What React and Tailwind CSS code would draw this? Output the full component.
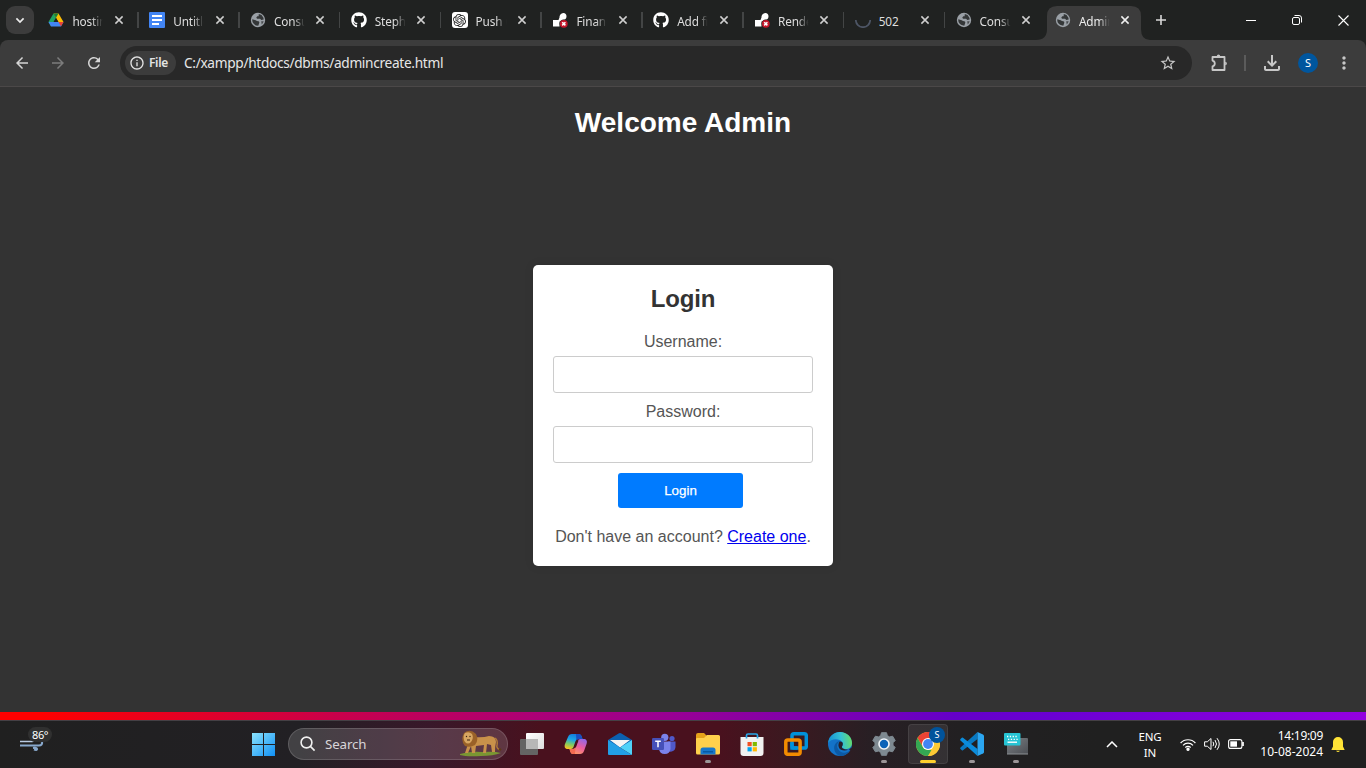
import React from "react";
import { FaGithub } from "react-icons/fa";
import { SiOpenai } from "react-icons/si";
import {
  MdStarBorder, MdRefresh, MdArrowBack,
  MdArrowForward, MdOutlineFileDownload, MdMoreVert, MdOutlineInfo,
} from "react-icons/md";

const DriveIcon = () => (
  <svg width="16" height="16" viewBox="0 0 16 16">
    <path d="M5.500 1.500 8 5.800 3 14.400.5 10z" fill="#1fa463" />
    <path d="M10.500 1.500 15.500 10H10.500L5.600 1.500z" fill="#fbbc04" />
    <path d="M5.500 1.500h5L8 5.800z" fill="#188038" />
    <path d="M.5 10H15.500L13 14.400H3z" fill="#4285f4" />
    <path d="M10.500 10h5L13 14.400z" fill="#ea4335" />
    <path d="M8 6.200 10.200 10H5.800z" fill="#202221" />
  </svg>
);
const DocsIcon = () => (
  <svg width="16" height="16" viewBox="0 0 16 16">
    <rect width="16" height="16" rx="1" fill="#4285f4" />
    <path d="M3 4h10M3 8h10M3 12h7" stroke="#fff" strokeWidth="1.900" />
  </svg>
);
const Globe = () => (
  <svg width="16" height="16" viewBox="0 0 16 16">
    <circle cx="8" cy="8" r="7.200" fill="#9aa0a6" />
    <path d="M2.300 7.200 5.700 8.300q1.200 1 2.600 1 1.200.2 1 1.500L8.300 13.700Q4.500 13.600 2.800 10.600 2.100 9 2.300 7.200z" fill="#343738" />
    <path d="M8.800 2.100q3.200.4 4.600 3.600l.3 1.900-2.400.3L10.100 6.700H7l-.7-1.200 1-1.300h1.300z" fill="#343738" />
    <path d="M11.200 9.200h2.500q-.5 2-2 3.200z" fill="#4a4d50" />
  </svg>
);
const Github = () => <FaGithub size={16} color="#fff" />;
const Gpt = () => (
  <span className="flex h-4 w-4 items-center justify-center rounded-[3px] bg-white">
    <SiOpenai size={13} color="#222" />
  </span>
);
const RenderIcon = () => (
  <svg width="16" height="16" viewBox="0 0 16 16">
    <path d="M1 8h5.500l1-2.500A4 4 0 0 1 11.300 1a3.400 3.400 0 0 1 3.200 3.400A3.800 3.800 0 0 1 11 8L7.500 9.500v5H1z" fill="#fff" />
    <circle cx="11.800" cy="11.800" r="4.300" fill="#202221" />
    <circle cx="11.800" cy="11.800" r="3.900" fill="#c5162a" />
    <path d="m10.200 10.200 3.200 3.200m0-3.200-3.200 3.200" stroke="#fff" strokeWidth="1.500" />
  </svg>
);
const Spinner = () => (
  <svg width="16" height="16" viewBox="0 0 16 16">
    <path d="M.800 8a7.200 7.200 0 0 0 14.400 0" fill="none" stroke="#4d5565" strokeWidth="1.700" />
  </svg>
);
const Extension = () => (
  <svg width="18" height="18" viewBox="0 0 18 18" fill="none" stroke="#c7c7c7" strokeWidth="1.800" strokeLinejoin="round">
    <path d="M2.500 3h12v13h-12v-3.600q2.300-.6 2.300-2.900T2.500 6.600z" />
    <path d="M6.800 2.200a1.700 1.700 0 0 1 3.400 0zM15.200 7.800a1.700 1.700 0 0 1 0 3.400z" fill="#c7c7c7" stroke="none" />
  </svg>
);
const Cross = ({ color = "#d4d4d4" }) => (
  <svg width="10" height="10" viewBox="0 0 10 10">
    <path d="m1.400 1.400 7.200 7.200m0-7.200L1.400 8.600" stroke={color} strokeWidth="1.500" />
  </svg>
);

const tabs = [
  ["hostin", DriveIcon], ["Untitle", DocsIcon], ["Consu", Globe], ["Stephe", Github],
  ["Push C", Gpt], ["Financ", RenderIcon], ["Add fi", Github], ["Rende", RenderIcon],
  ["502", Spinner], ["Consu", Globe],
];

function Tab({ title, Icon, active, last }) {
  return (
    <div
      className={
        "relative flex h-10 shrink-0 items-center " +
        (active ? "w-[100px] pl-[9px]" : "w-[100.8px] pl-[10.400px]")
      }
    >
      {active && (
        <svg className="absolute top-[6px] left-[-10px]" width="114" height="34" viewBox="0 0 114 34">
          <path d="M0 34q11 0 11-11V10Q11 0 21 0H95q10 0 10 10V23q0 11 9 11z" fill="#3c3c3c" />
        </svg>
      )}
      <span className="relative flex w-4 shrink-0 justify-center"><Icon /></span>
      <span
        className={
          "relative top-px ml-2 w-[32px] overflow-hidden text-[11.800px] leading-4 tracking-[-0.150px] whitespace-nowrap " +
          (title === "502" ? "" : "[mask-image:linear-gradient(to_right,black_62%,transparent_96%)] ") +
          (active ? "text-[#ececec]" : "text-[#dedede]")
        }
      >
        {title}
      </span>
      <span className="relative ml-[9.500px] flex"><Cross color={active ? "#f0f0f0" : "#cfcfcf"} /></span>
      {!active && !last && <span className="ml-auto h-4 w-[1.5px] bg-[#434545]" />}
    </div>
  );
}

function Browser() {
  return (
    <header>
      <div className="flex h-10 items-center bg-[#202221]">
        <button className="mr-[4px] ml-[6px] flex h-7 w-7 shrink-0 items-center justify-center rounded-[9px] bg-[#3c3c3c]">
          <svg width="10" height="7" viewBox="0 0 10 7"><path d="m1.400 1.400 3.600 3.600 3.600-3.600" fill="none" stroke="#ececec" strokeWidth="1.700" /></svg>
        </button>
        {tabs.map(([t, I], i) => <Tab key={i} title={t} Icon={I} last={i === 9} />)}
        <Tab title="Admin" Icon={Globe} active />
        <svg className="ml-[9px] shrink-0" width="12" height="12" viewBox="0 0 12 12"><path d="M6 1v10M1 6h10" stroke="#d8d8d8" strokeWidth="1.600" /></svg>
        <div className="ml-auto flex shrink-0 items-center pr-[17px]">
          <svg width="10" height="10"><path d="M0 5.500h10" stroke="#fff" /></svg>
          <svg className="ml-[36px]" width="10" height="10" viewBox="0 0 10 10" fill="none" stroke="#fff"><rect x=".5" y="2.500" width="7" height="7" rx="1.500" /><path d="M2.500.5H7A2.500 2.500 0 0 1 9.500 3V7.500" /></svg>
          <svg className="ml-[36px]" width="11" height="11" viewBox="0 0 11 11"><path d="m.5.5 10 10m0-10-10 10" stroke="#fff" strokeWidth="1.100" /></svg>
        </div>
      </div>
      <div className="bg-[#202221]">
        <div className="flex h-[47px] items-center rounded-t-lg border-b border-[#4b4848] bg-[#3c3c3c] text-[#c7c7c7]">
          <MdArrowBack className="ml-[13px]" size={18} color="#d5d5d5" />
          <MdArrowForward className="ml-[18px]" size={18} color="#7c7c7c" />
          <MdRefresh className="ml-[18px]" size={18} color="#d5d5d5" />
          <div className="ml-[17px] flex h-[34px] w-[1072px] items-center rounded-full bg-[#282828] pl-[5px]">
            <div className="flex h-6 w-[51px] items-center rounded-full bg-[#3c3c3c] pl-1">
              <MdOutlineInfo size={16} color="#e3e3e3" />
              <span className="ml-1 text-[12px] font-semibold tracking-[-0.350px] text-[#e3e3e3]">File</span>
            </div>
            <span className="ml-2 text-[13.700px] leading-5 tracking-[-0.320px] text-[#e6e6e6]">C:/xampp/htdocs/dbms/admincreate.html</span>
            <MdStarBorder className="mr-[15px] ml-auto" size={18} color="#c7c7c7" />
          </div>
          <span className="ml-[18px] flex"><Extension /></span>
          <span className="ml-[16px] h-4 w-[2px] bg-[#5b5b5b]" />
          <MdOutlineFileDownload className="ml-[14px]" size={24} />
          <span className="ml-[14px] flex h-5 w-5 items-center justify-center rounded-full bg-[#00569e] text-[11px] text-white">S</span>
          <MdMoreVert className="ml-[16px]" size={20} />
        </div>
      </div>
    </header>
  );
}

function Page() {
  return (
    <main className="flex h-[625px] flex-col items-center bg-[#333] font-['Liberation_Sans',sans-serif] text-[#555]">
      <h1 className="mt-[15px] text-[28px] leading-[42px] font-bold text-white">Welcome Admin</h1>
      <section className="mt-[121px] flex h-[301px] w-[300px] flex-col items-center rounded-[5px] bg-white px-5 shadow-[0_0_10px_rgba(0,0,0,0.1)]">
        <h2 className="mt-5 text-[24px] leading-7 font-bold tracking-[-0.200px] text-[#333]">Login</h2>
        <label className="mt-[20px] text-[16px] leading-[18px]">Username:</label>
        <input className="mt-[5px] h-[37px] w-[260px] rounded-[3px] border border-[#ccc] bg-white" />
        <label className="mt-[10px] text-[16px] leading-[18px]">Password:</label>
        <input className="mt-[5px] h-[37px] w-[260px] rounded-[3px] border border-[#ccc] bg-white" />
        <button className="mt-[10px] mr-[5px] h-[35px] w-[125px] rounded-[3px] bg-[#007bff] text-[13.333px] text-white [-webkit-text-stroke:0.250px_white]">Login</button>
        <p className="mt-[20px] text-[16px] leading-[18px] whitespace-nowrap">
          Don't have an account? <a className="text-[#0000ee] underline">Create one</a>.
        </p>
      </section>
    </main>
  );
}

const TaskView = () => (
  <svg width="24" height="24" viewBox="0 0 24 24">
    <defs><linearGradient id="tv" x2="1" y2="1"><stop stopColor="#fff" /><stop offset="1" stopColor="#ddd" /></linearGradient></defs>
    <rect y="7" width="18" height="16" rx="1" fill="#646464" />
    <rect x="6" y="1" width="18" height="16" rx="1" fill="url(#tv)" />
    <path d="M6 7h12v10H6z" fill="#b7b7b7" />
  </svg>
);
const Copilot = () => (
  <svg width="24" height="24" viewBox="0 0 24 24">
    <defs>
      <linearGradient id="ca" x1=".6" x2=".3" y2="1"><stop stopColor="#1479dc" /><stop offset=".4" stopColor="#1ba7e8" /><stop offset=".7" stopColor="#7bca65" /><stop offset="1" stopColor="#f5c324" /></linearGradient>
      <linearGradient id="cb" x1=".8" x2=".3" y2="1"><stop stopColor="#9267e8" /><stop offset=".5" stopColor="#eb5da0" /><stop offset="1" stopColor="#ff9a62" /></linearGradient>
    </defs>
    <path d="M8 2h7q2 0 2.800 2.500l.7 2.500H14q-1.800 0-2.500 2.200L9.500 15q-.6 2-2.500 2H4c-3 0-4-2-3-5L4 5q1-3 4-3z" fill="url(#ca)" />
    <path d="M12 2h3q2 0 2.800 2.500l.7 2.500H15q-1.600 0-2.600 1.600z" fill="#194fc2" />
    <path d="M16 22H9q-2 0-2.700-2.300L5.500 17h3.500q1.800 0 2.500-2.200L13.800 9q.6-2 2.500-2h3.200c3 0 4 2 3 5L20 19q-1 3-4 3z" fill="url(#cb)" />
    <path d="M11 22H9q-2 0-2.700-2.300L5.500 17H9q1.800 0 2.500-1.700z" fill="#f46b52" />
    <path d="M12.500 8.500h2l-2.600 7h-2z" fill="#49111e" />
  </svg>
);
const Mail = () => (
  <svg width="24" height="24" viewBox="0 0 24 24">
    <path d="M0 8 11 1.300q1-.6 2 0L24 8v7H0z" fill="#0c60b0" />
    <path d="M2 8h20l-10 7.500z" fill="#f4f4f4" />
    <path d="M24 8 12 15.500 24 23z" fill="#50d2f8" />
    <path d="M0 8v14q0 1 1 1h23L12 15.500z" fill="#229fe6" />
  </svg>
);
const Teams = () => (
  <svg width="24" height="24" viewBox="0 0 24 24">
    <circle cx="20" cy="6.500" r="2.600" fill="#5059c9" /><circle cx="12.800" cy="5.300" r="3.600" fill="#7b83eb" />
    <path d="M16 9.500h7.500V15a5 5 0 0 1-7.500 4z" fill="#5059c9" />
    <path d="M7 9.500h11.500V17a5.800 5.800 0 0 1-11.500 0z" fill="#7b83eb" />
    <rect y="6" width="12" height="12" rx="1.200" fill="#4650b8" />
    <path d="M3.200 9.300h5.600M6 9.300v6" stroke="#fff" strokeWidth="1.500" />
  </svg>
);
const Folder = () => (
  <svg width="24" height="24" viewBox="0 0 24 24">
    <path d="M0 3q0-2 2-2h6l3 3h11q2 0 2 2v5H0z" fill="#e6a21a" />
    <path d="M1.500 6H8l3-3h11.500Q24 3 24 4.500V21q0 1.500-1.500 1.500h-21Q0 22.500 0 21V6.500z" fill="#ffd04c" />
    <path d="M4.500 22.500V18q0-2.500 2.500-2.500h10q2.500 0 2.500 2.500v4.500z" fill="#1877c9" /><path d="M7 19h10v1.500H7z" fill="#0759a1" />
  </svg>
);
const Store = () => (
  <svg width="24" height="24" viewBox="0 0 24 24">
    <path d="M.5 5h23v16q0 3-3 3h-17q-3 0-3-3z" fill="#f1f1f1" />
    <path d="M6.500 6.500V3.500Q6.500 2 8 2h8q1.500 0 1.500 1.500v3" fill="none" stroke="#28a8ea" strokeWidth="1.700" />
    <path d="M7.500 10h4.200v4.200H7.500z" fill="#f25022" /><path d="M12.700 10h4.200v4.200h-4.200z" fill="#7fba00" />
    <path d="M7.500 15.200h4.200v4.200H7.500z" fill="#00a4ef" /><path d="M12.700 15.200h4.200v4.200h-4.200z" fill="#ffb900" />
  </svg>
);
const VmIcon = () => (
  <svg width="24" height="24" viewBox="0 0 24 24" fill="none" strokeWidth="3.500">
    <rect x="8" y="1.800" width="14.300" height="14.300" rx="2" stroke="#0091da" />
    <rect x="1.800" y="8" width="14.300" height="14.300" rx="2" stroke="#f38b00" />
    <path d="M8 10.500V16h5.500" stroke="#0091da" />
  </svg>
);
const Edge = () => (
  <svg width="24" height="24" viewBox="0 0 24 24">
    <defs><linearGradient id="eg" x1="0" y1=".5" x2="1" y2=".4"><stop stopColor="#1590d2" /><stop offset=".55" stopColor="#35c1d4" /><stop offset="1" stopColor="#66dc66" /></linearGradient></defs>
    <circle cx="12" cy="12" r="12" fill="#1373c9" />
    <path d="M0 11C1 4 6 0 12 0c7 0 12 5 12 11 0 4-3 6-6.500 6-2.500 0-4-1.500-3.500-2.500 1-1.500 1-3 .5-4C12 6 3 6 0 11z" fill="url(#eg)" />
    <path d="M12 9c-4 2-4 8 1 11 3 1.600 7 .5 9-2-2 4-6 6-10 6-5-1-8-9-4-13 1-1.200 3-2 4-2z" fill="#0c59a4" />
    <path d="M14 14.500c1-1.500 1-3 .5-4-1-1-2.500-1-3-.8-1.500 2-1.700 6 1.500 8 3.500 1.500 8 .5 10-2l1 .5c-1 2-2 3-2.700 1.300C19 18 13 17 14 14.500z" fill="#28202a" />
  </svg>
);
const Gear = () => (
  <svg width="24" height="24" viewBox="0 0 24 24">
    <path d="M9.500.7h5l.9 3 2.200 1.200 3-.7 2.600 4.300L21 10.800v2.400l2.200 2.300-2.600 4.300-3-.7-2.200 1.200-.9 3h-5l-.9-3-2.200-1.200-3 .7-2.600-4.300L3 13.200v-2.400L.8 8.500l2.600-4.300 3 .7 2.200-1.200z" fill="#7e8991" stroke="#7e8991" strokeLinejoin="round" />
    <circle cx="12" cy="12" r="5.800" fill="#f1f4f7" /><circle cx="12" cy="12" r="4.200" fill="#0b62b8" />
  </svg>
);
const Chrome = () => (
  <svg width="24" height="24" viewBox="0 0 24 24">
    <circle cx="12" cy="12" r="12" fill="#fcc934" />
    <path d="M1.600 6A12 12 0 0 1 22.400 6H12L7 15z" fill="#ea4335" />
    <path d="M1.600 6 6.800 15Q9 18 12 18h5.200L12 24A12 12 0 0 1 1.600 6z" fill="#34a853" />
    <path d="M17.200 15 12 24A12 12 0 0 0 22.400 6H12z" fill="#fcc934" />
    <circle cx="12" cy="12" r="6" fill="#fff" /><circle cx="12" cy="12" r="4.900" fill="#4285f4" />
  </svg>
);
const Code = () => (
  <svg width="24" height="24" viewBox="0 0 24 24">
    <path d="M.5 15.500 17.500 0v7L3 18.200q-.6.500-1.200 0l-1.300-1.100q-.7-.8 0-1.600z" fill="#0879c2" />
    <path d="M.5 8.500 17.500 24v-7L3 5.800q-.6-.5-1.200 0L.5 6.900q-.7.800 0 1.600z" fill="#0b8cdc" />
    <path d="M17.500 0 23 2.500q1 .5 1 1.500v16q0 1-1 1.500L17.500 24z" fill="#2ba6f1" />
  </svg>
);
const TouchKeyboard = () => (
  <svg width="24" height="24" viewBox="0 0 24 24">
    <defs><linearGradient id="tk" x2="1" y2="1"><stop stopColor="#7c8085" /><stop offset="1" stopColor="#4b4e53" /></linearGradient></defs>
    <path d="M3 6h20q1 0 1 1v15H3z" fill="url(#tk)" /><path d="M3 21.500h21v1H3z" fill="#8d9094" />
    <rect y="1" width="16.500" height="12.500" rx="1" fill="#27c4d4" />
    <path d="M3 4.500h11M4 7.300h10" stroke="#fff" strokeWidth="1.300" strokeDasharray="1.300 1.500" /><path d="M3.500 10.200h9.500" stroke="#fff" strokeWidth="1.400" />
  </svg>
);
const Lion = () => (
  <svg width="43" height="28" viewBox="0 0 43 28">
    <path d="M1 24q10-3 22-2 12-1 19 1-8 3-20 3Q8 27 1 25z" fill="#7a9632" />
    <path d="M14 7q10 1 16-1 7 0 7 6-1 4-1 10h-3l-1-7-4-1-1 9h-3l1-8-8 1-1 7h-3l-1-7-3 7H6l3-9z" fill="#c8914a" />
    <path d="M36 8q3 2 2 7-1 3 3 5" stroke="#b27a38" strokeWidth="1.400" fill="none" /><circle cx="41" cy="19.500" r="1.300" fill="#5d3a18" />
    <path d="M5 3q6-5 12 1 3 6-1 11-5 3-10 1-5-6-1-13z" fill="#9a6128" />
    <path d="M6 3q4-2 7 1 2 4-1 8-3 3-6 0-3-5 0-9z" fill="#d8a662" />
    <circle cx="7.500" cy="6.500" r=".7" fill="#3c2410" /><circle cx="11" cy="6.500" r=".7" fill="#3c2410" /><path d="M8 10h3" stroke="#3c2410" />
  </svg>
);

const apps = [
  [TaskView], [Copilot], [Mail], [Teams], [Folder, "dot"], [Store], [VmIcon], [Edge],
  [Gear, "dot"], [Chrome, "active"], [Code, "dot"], [TouchKeyboard, "dot"],
];

function Taskbar() {
  return (
    <footer className="flex h-12 items-center bg-[linear-gradient(to_right,#202020_0,#222024_300px,#39182a_430px,#49111e_540px,#49111e_720px,#3b1920_790px,#281f24_870px,#222022_960px,#202020_1100px)] shadow-[inset_0_1px_0_#454045]">
      <div className="relative ml-5 flex h-[46px] w-8 shrink-0 items-center">
        <svg width="24" height="15" viewBox="0 0 24 15" fill="none">
          <path d="M0 4.500h12q2 0 1-3" stroke="#b9cbe3" strokeWidth="1.700" />
          <path d="M0 8.500h19q3.500 0 3-3.500M13 11q4-.5 4 1t-3 .5" stroke="#88a8cc" strokeWidth="2.200" />
        </svg>
        <span className="absolute top-[6px] left-[8px] rounded-full bg-[#303030] px-[4px] text-[11px] leading-[15px] tracking-[-0.400px] text-white">86°</span>
      </div>
      <svg className="ml-[200px] shrink-0" width="23" height="23" viewBox="0 0 23 23">
        <defs><linearGradient id="wn" x2="1" y2="1"><stop stopColor="#8be3fd" /><stop offset="1" stopColor="#1090f5" /></linearGradient></defs>
        <path d="M0 0h11v11H0zM12 0h11v11H12zM0 12h11v11H0zM12 12h11v11H12z" fill="url(#wn)" />
      </svg>
      <div className="ml-[13px] flex h-8 w-[220px] shrink-0 items-center rounded-full border border-white/15 bg-white/15 pl-[11px]">
        <svg width="16" height="16" viewBox="0 0 16 16" fill="none" stroke="#f0f0f0" strokeWidth="1.600"><circle cx="6.500" cy="6.500" r="5.400" /><path d="m10.400 10.400 4.200 4.200" /></svg>
        <span className="ml-[9px] pt-px text-[13.300px] tracking-[-0.100px] text-[#d8d5d8]">Search</span>
        <span className="mr-[5px] ml-auto"><Lion /></span>
      </div>
      <div className="ml-[2px] flex shrink-0">
        {apps.map(([Icon, state], i) => (
          <div key={i} className="flex w-11 justify-center">
            <div className={"relative flex h-10 w-10 items-center justify-center rounded " + (state === "active" ? "bg-white/8 ring-1 ring-white/8 ring-inset" : "")}>
              <Icon />
              {state === "active" && <span className="absolute top-[3px] right-[3px] flex h-4 w-4 items-center justify-center rounded-full bg-[#00539b] text-[9px] text-white">S</span>}
              {state === "dot" && <span className="absolute bottom-px h-[3px] w-[6px] rounded-full bg-[#9c9698]" />}
              {state === "active" && <span className="absolute bottom-px h-[3px] w-4 rounded-full bg-[#ffd02e]" />}
            </div>
          </div>
        ))}
      </div>
      <div className="ml-auto flex shrink-0 items-center pr-[21px] text-[12px] leading-4 text-white">
        <svg width="12" height="7" viewBox="0 0 12 7"><path d="m1 6 5-5 5 5" fill="none" stroke="#fff" strokeWidth="1.500" /></svg>
        <div className="ml-[20px] w-6 pt-[2px] text-center text-[11.500px] tracking-[-0.100px]"><div>ENG</div><div>IN</div></div>
        <svg className="ml-[18px]" width="16" height="13" viewBox="0 0 16 13" fill="none" stroke="#fff" strokeWidth="1.200"><path d="M.6 5a10 10 0 0 1 14.800 0M3 7.300a7 7 0 0 1 10 0M5.300 9.500a4 4 0 0 1 5.400 0" /><circle cx="8" cy="11.300" r="1.100" fill="#fff" /></svg>
        <svg className="ml-[8px]" width="16" height="14" viewBox="0 0 16 14" fill="none" stroke="#fff"><path d="M.6 4.800h2.700L7 1.500v11L3.300 9.200H.6zM9 4.800q1.500 2.200 0 4.400M11 3q3 4 0 8M13 1.200q4.500 5.800 0 11.600" /></svg>
        <svg className="ml-[8px]" width="17" height="10" viewBox="0 0 17 10"><rect x=".6" y=".6" width="13.300" height="8.800" rx="2" fill="none" stroke="#fff" strokeWidth="1.100" /><path d="M2.300 2.300H9v5.400H2.300z" fill="#fff" /><path d="M15 3v4" stroke="#fff" strokeWidth="1.700" /></svg>
        <div className="ml-[14px] w-[64px] text-right text-[12px] whitespace-nowrap"><div className="tracking-[-0.300px]">14:19:09</div><div className="flex justify-end">10-08-2024</div></div>
        <svg className="ml-[8px]" width="14" height="17" viewBox="0 0 14 17"><path d="M7 1a5 5 0 0 1 5 5v4.500l1.500 3v.5H.5v-.5l1.500-3V6a5 5 0 0 1 5-5zM5 14.700h4q-2 2.600-4 0z" fill="#ffe336" /></svg>
      </div>
    </footer>
  );
}

export default function App() {
  return (
    <div className="h-[768px] w-[1366px] overflow-hidden font-['Noto_Sans',sans-serif]">
      <Browser />
      <Page />
      <div className="h-2 bg-[linear-gradient(to_right,#ff0000_0%,#ff0000_3%,#c8004c_25%,#960096_50%,#6400c8_70%,#6a00d2_77%,#9400e0_100%)]" />
      <Taskbar />
    </div>
  );
}
